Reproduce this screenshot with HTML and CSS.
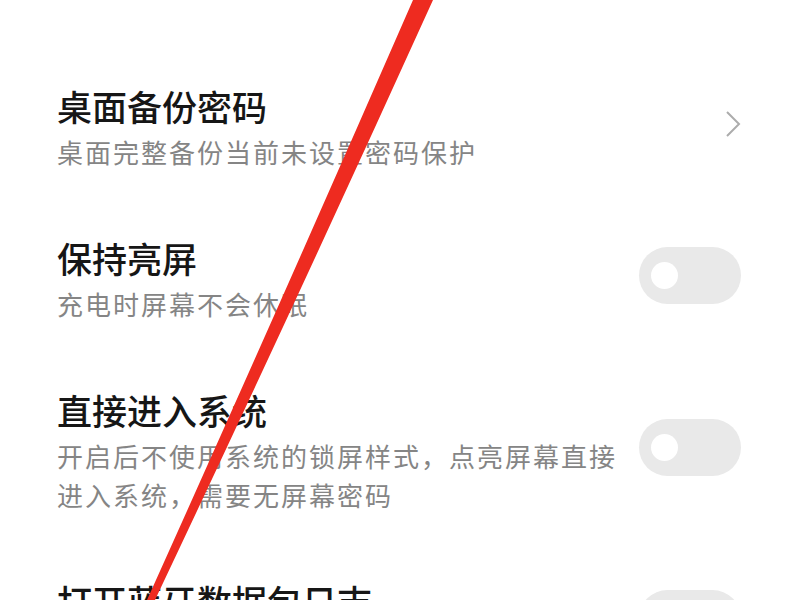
FILE: index.html
```html
<!DOCTYPE html>
<html lang="zh-CN">
<head>
    <meta charset="UTF-8">
    <meta name="viewport" content="width=device-width, initial-scale=1.0">
    <title>锁屏设置</title>
    <link rel="stylesheet" href="styles.css">
</head>
<body>

    <main class="settings">
        <div class="setting-row">
            <div class="setting-text">
                <div class="setting-title">桌面备份密码</div>
                <div class="setting-desc">桌面完整备份当前未设置密码保护</div>
            </div>
            <svg class="chevron" width="16" height="28" viewBox="0 0 16 28">
                <path d="M2 1 L14 13 L2 25" fill="none" stroke="#acacac" stroke-width="2"/>
            </svg>
        </div>

        <div class="setting-row">
            <div class="setting-text">
                <div class="setting-title">保持亮屏</div>
                <div class="setting-desc">充电时屏幕不会休眠</div>
            </div>
            <span class="switch"><span class="knob"></span></span>
        </div>

        <div class="setting-row">
            <div class="setting-text">
                <div class="setting-title">直接进入系统</div>
                <div class="setting-desc">开启后不使用系统的锁屏样式，点亮屏幕直接进入系统，需要无屏幕密码</div>
            </div>
            <span class="switch"><span class="knob"></span></span>
        </div>

        <div class="setting-row">
            <div class="setting-text">
                <div class="setting-title">打开蓝牙数据包日志</div>
                <div class="setting-desc">用于调试蓝牙连接问题</div>
            </div>
            <span class="switch"><span class="knob"></span></span>
        </div>
    </main>

    <!-- red pen stroke drawn over the list, thinning toward the bottom -->
    <svg class="pen-mark" width="800" height="600" viewBox="0 0 800 600">
        <path d="M413 0 Q 282 300 147 600 L155 600 Q 297 300 433 0 Z" fill="#ee2b20"/>
    </svg>

</body>
</html>
```

FILE: styles.css
```css
html, body {
    margin: 0;
    padding: 0;
    background-color: #fff;
}
body {
    width: 800px;
    height: 600px;
    overflow: hidden;
    position: relative;
    font-family: "Noto Sans CJK SC", "Noto Sans", sans-serif;
}
.settings {
    padding: 52px 59px 0 57px;
}
.setting-row {
    display: flex;
    align-items: center;
    gap: 10px;
    padding: 33px 0;
}
.setting-text {
    flex: 1;
}
.setting-title {
    font-size: 35px;
    line-height: 42px;
    font-weight: 500;
    color: #161616;
}
.setting-desc {
    margin-top: 5px;
    font-size: 26px;
    line-height: 39px;
    letter-spacing: 2px;
    color: #858585;
}
.chevron {
    margin-bottom: 6px;
}
.switch {
    display: flex;
    align-items: center;
    box-sizing: border-box;
    width: 102px;
    height: 57px;
    padding-left: 12px;
    margin-bottom: 9px;
    border-radius: 29px;
    background-color: #e9e9e9;
}
.knob {
    width: 27px;
    height: 27px;
    border-radius: 50%;
    background-color: #fff;
}
.pen-mark {
    position: absolute;
    top: 0;
    left: 0;
}
```
